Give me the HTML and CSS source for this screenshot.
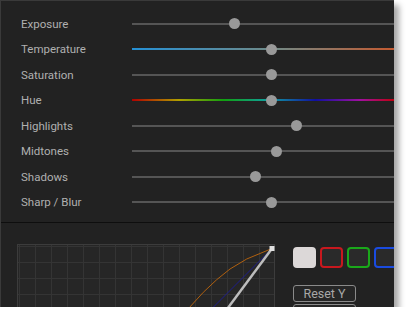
FILE: index.html
```html
<!DOCTYPE html>
<html lang="en">
<head>
  <meta charset="UTF-8">
  <title>Adjustments</title>
  <link rel="stylesheet" href="styles.css">
</head>
<body>
  <div class="panel">
    <div class="adjust">
      <div class="row"><span class="label">Exposure</span><div class="track"><span class="thumb" style="left: 39.3%"></span></div></div>
      <div class="row"><span class="label">Temperature</span><div class="track temp"><span class="thumb" style="left: 53.4%"></span></div></div>
      <div class="row"><span class="label">Saturation</span><div class="track"><span class="thumb" style="left: 53.4%"></span></div></div>
      <div class="row"><span class="label">Hue</span><div class="track hue"><span class="thumb" style="left: 53.4%"></span></div></div>
      <div class="row"><span class="label">Highlights</span><div class="track"><span class="thumb" style="left: 62.6%"></span></div></div>
      <div class="row"><span class="label">Midtones</span><div class="track"><span class="thumb" style="left: 55%"></span></div></div>
      <div class="row"><span class="label">Shadows</span><div class="track"><span class="thumb" style="left: 47.3%"></span></div></div>
      <div class="row"><span class="label">Sharp / Blur</span><div class="track"><span class="thumb" style="left: 53.4%"></span></div></div>
    </div>

    <div class="curves">
      <div class="curve-box">
        <svg class="curve-lines" width="258" height="258" viewBox="0 0 258 258">
          <line x1="255" y1="4.5" x2="-3" y2="262.5" stroke="#1c1c8c" stroke-width="1"/>
          <polyline points="255,4.5 229.7,15 213,25 199.7,35.7 186.3,48.3 174.7,61 164,73 150,92" fill="none" stroke="#b0600f" stroke-width="1"/>
          <line x1="255" y1="4.5" x2="67" y2="258" stroke="#bdbdbd" stroke-width="2.5"/>
          <rect x="252.5" y="2" width="5" height="5" fill="#e0e0e0"/>
        </svg>
      </div>
      <div class="side">
        <div class="swatches">
          <span class="swatch white"></span>
          <span class="swatch red"></span>
          <span class="swatch green"></span>
          <span class="swatch blue"></span>
        </div>
        <button class="btn">Reset Y</button>
        <button class="btn"></button>
      </div>
    </div>
  </div>
</body>
</html>
```

FILE: styles.css
```css
body {
  margin: 0;
  background-color: #fff;
  font-family: Roboto, sans-serif;
}

.panel {
  box-sizing: border-box;
  width: 394px;
  height: 307px;
  background-color: #222;
  border-top: 1px solid #3a3a3a;
  border-left: 1px solid #3a3a3a;
  box-shadow: 5px 5px 6px rgba(0, 0, 0, .35);
  overflow: hidden;
}

.adjust {
  padding: 10px 0 7px;
  border-bottom: 1px solid #0e0e0e;
}

.row {
  display: flex;
  align-items: center;
  height: 25.5px;
}

.label {
  width: 111px;
  padding-left: 20px;
  font-size: 11.5px;
  color: #b0b0b0;
}

.track {
  position: relative;
  flex: 1;
  height: 2px;
  background-color: #555;
}

.track.temp {
  background: linear-gradient(to right, #2591d6, #6f8a88 53%, #c45a30);
}

.track.hue {
  background: linear-gradient(to right, #b00000, #b0a000 18%, #10a010 35%, #10a0a0 52%, #1010a0 70%, #a010a0 87%, #c00010);
}

.thumb {
  position: absolute;
  top: -4.5px;
  width: 11px;
  height: 11px;
  margin-left: -5.5px;
  border-radius: 50%;
  background-color: #999;
}

.curves {
  display: flex;
  gap: 18px;
  padding: 21px 0 0 16px;
}

.curve-box {
  position: relative;
  flex: none;
  box-sizing: border-box;
  width: 258px;
  height: 258px;
  border: 1px solid #3c3c3c;
  background-color: #262626;
  background-image:
    linear-gradient(to right, #343434 1px, transparent 1px),
    linear-gradient(to bottom, #343434 1px, transparent 1px);
  background-size: 16px 16px;
  background-position: 1px 1px;
}

.curve-lines {
  position: absolute;
  left: -1px;
  top: -1px;
}

.side {
  display: flex;
  flex-direction: column;
  align-items: flex-start;
  padding-top: 3px;
}

.swatches {
  display: flex;
  gap: 4px;
}

.swatch {
  box-sizing: border-box;
  width: 23px;
  height: 21px;
  border: 2px solid;
  border-radius: 4px;
  background-color: #2a2a2a;
}

.swatch.white { border-color: #dcd8d8; background-color: #dcd8d8; }
.swatch.red { border-color: #c8181e; }
.swatch.green { border-color: #1aa81a; }
.swatch.blue { border-color: #1a4be0; }

.btn {
  box-sizing: border-box;
  width: 63px;
  height: 17px;
  margin-top: 17px;
  padding: 0;
  border: 1px solid #8a8a8a;
  border-radius: 3px;
  background-color: #262626;
  color: #a8a8a8;
  font-family: Roboto, sans-serif;
  font-size: 12.5px;
  line-height: 14px;
}

.btn + .btn {
  margin-top: 2px;
}
```
